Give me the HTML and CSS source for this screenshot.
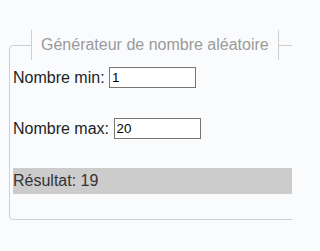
FILE: index.html
```html
<!DOCTYPE html>
<html lang="fr">
<head>
<meta charset="utf-8">
<title>Générateur de nombre aléatoire</title>
<link rel="stylesheet" href="styles.css">
</head>
<body>
<div class="page">
  <fieldset class="gen">
    <legend class="title">Générateur de nombre aléatoire</legend>
    <div class="row row-min"><label class="lbl" for="min">Nombre min:</label><input class="num" id="min" type="text" value="1"></div>
    <div class="row row-max"><label class="lbl" for="max">Nombre max:</label><input class="num" id="max" type="text" value="20"></div>
    <div class="result">Résultat: 19</div>
  </fieldset>
</div>
</body>
</html>
```

FILE: styles.css
```css
html, body {
  margin: 0;
  padding: 0;
  background: #fafbfd;
}
body {
  font-family: "Liberation Sans", Arial, sans-serif;
  font-size: 16px;
  color: #1e1e1e;
}
.page {
  width: 292px;
  height: 251px;
  overflow: hidden;
  padding: 30px 0 0 9px;
  box-sizing: border-box;
}
.gen {
  margin: 0;
  width: 320px;
  border: 1px solid #cfcfcf;
  border-radius: 4px;
  padding: 0 0 25px 3px;
}
.title {
  margin-left: 18px;
  padding: 0 9px;
  border-left: 1px solid #cfcfcf;
  border-right: 1px solid #cfcfcf;
  line-height: 30px;
  color: #9a9a9a;
}
.row {
  display: flex;
  align-items: center;
  gap: 4.5px;
  height: 21px;
}
.row-min { margin-top: 7px; }
.row-max { margin-top: 30px; }
.num {
  box-sizing: border-box;
  width: 87px;
  height: 21px;
  margin: 0;
  padding: 1px 2px;
  border: 1px solid #767676;
  background: #fff;
  font-family: "Liberation Sans", Arial, sans-serif;
  font-size: 13.33px;
  color: #000;
}
.result {
  margin-top: 29px;
  height: 26px;
  line-height: 26px;
  background: #cccccc;
  color: #333;
}
```
